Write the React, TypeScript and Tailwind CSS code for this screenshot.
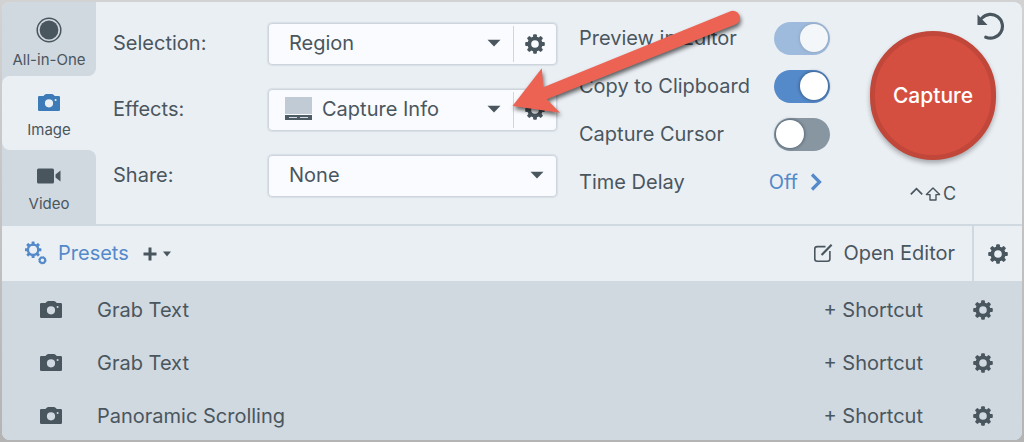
import { useState, type ReactNode } from "react";

const presets = [
  { id: 1, name: "Grab Text" },
  { id: 2, name: "Grab Text" },
  { id: 3, name: "Panoramic Scrolling" },
];

const GEAR_TEETH = [0, 45, 90, 135, 180, 225, 270, 315];

function GearIcon() {
  return (
    <svg viewBox="0 0 20 20" className="size-5" fill="currentColor" aria-hidden="true">
      {GEAR_TEETH.map((angle) => (
        <rect
          key={angle}
          x="8.1"
          y="0.2"
          width="3.8"
          height="5"
          rx="1"
          transform={`rotate(${angle} 10 10)`}
        />
      ))}
      <circle cx="10" cy="10" r="5.7" fill="none" stroke="currentColor" strokeWidth="3.8" />
    </svg>
  );
}

function PresetsIcon() {
  return (
    <svg viewBox="0 0 22 24" className="h-6 w-[22px]" fill="currentColor" aria-hidden="true">
      {GEAR_TEETH.map((angle) => (
        <rect
          key={angle}
          x="6.6"
          y="0.5"
          width="3"
          height="4"
          rx="0.6"
          transform={`rotate(${angle} 8.1 8.8)`}
        />
      ))}
      <circle cx="8.1" cy="8.8" r="5.2" fill="none" stroke="currentColor" strokeWidth="2.4" />
      <circle cx="17.4" cy="19.3" r="2.8" fill="none" stroke="currentColor" strokeWidth="2" />
      <circle
        cx="17.4"
        cy="19.3"
        r="3.6"
        fill="none"
        stroke="currentColor"
        strokeWidth="1"
        strokeDasharray="1.5 1.33"
      />
    </svg>
  );
}

function CameraIcon() {
  return (
    <svg viewBox="0 0 22 17" className="h-[17px] w-[22px]" fill="currentColor" aria-hidden="true">
      <path
        fillRule="evenodd"
        d="M1.2 2H5.4L7 .5Q7.5 0 8.2 0H14Q14.7 0 15.2.5L16.8 2H20.8Q22 2 22 3.2V15.8Q22 17 20.8 17H1.2Q0 17 0 15.8V3.2Q0 2 1.2 2ZM11 5.2A4.1 4.1 0 1 0 11 13.4A4.1 4.1 0 1 0 11 5.2ZM17.6 5A1 1 0 1 0 17.6 7A1 1 0 1 0 17.6 5Z"
      />
    </svg>
  );
}

function VideoIcon() {
  return (
    <svg viewBox="0 0 24 16" className="h-4 w-6" fill="currentColor" aria-hidden="true">
      <rect x="0" y="0.5" width="17" height="15" rx="1.5" />
      <path d="M23.5 2.5V13.5L18.5 9.5V6.5Z" />
    </svg>
  );
}

function AllInOneIcon() {
  return (
    <svg viewBox="0 0 26 26" className="size-[26px]" aria-hidden="true">
      <circle cx="13" cy="13" r="11.8" fill="none" stroke="currentColor" strokeWidth="1.5" />
      <circle cx="13" cy="13" r="9.4" fill="currentColor" />
    </svg>
  );
}

function CaptureInfoIcon() {
  return (
    <svg viewBox="0 0 27 24" className="h-6 w-[27px]" aria-hidden="true">
      <rect width="27" height="17" fill="#c0cbd5" />
      <rect y="18" width="27" height="5" fill="#4e5c66" />
      <path d="M4 20.5H12M15 20.5H23" stroke="#d5dce3" strokeWidth="1" />
    </svg>
  );
}

function UndoIcon() {
  return (
    <svg viewBox="0 0 28 28" className="size-7" aria-hidden="true">
      <path
        d="M5 6A11.9 11.9 0 1 1 8.8 25.2"
        fill="none"
        stroke="currentColor"
        strokeWidth="3.2"
        strokeLinecap="round"
      />
      <path d="M0.5 2.6V13H10.5Z" fill="currentColor" />
    </svg>
  );
}

function EditIcon() {
  return (
    <svg
      viewBox="0 0 20 20"
      className="size-5"
      fill="none"
      stroke="currentColor"
      strokeWidth="1.6"
      aria-hidden="true"
    >
      <path d="M12.5 3.6H4.2Q1.8 3.6 1.8 6V15.8Q1.8 18.2 4.2 18.2H14.5Q16.9 18.2 16.9 15.8V8" />
      <path d="M8.6 12L18.6 1.8" strokeWidth="2.2" />
    </svg>
  );
}

function ControlKeyIcon() {
  return (
    <svg viewBox="0 0 13 14" className="h-3.5 w-[13px]" aria-hidden="true">
      <path d="M0.8 7.4L6.5 1.6L12.2 7.4" fill="none" stroke="currentColor" strokeWidth="1.7" />
    </svg>
  );
}

function ShiftKeyIcon() {
  return (
    <svg viewBox="0 0 16 14" className="h-3.5 w-4" aria-hidden="true">
      <path
        d="M8 1L14.6 7.6H11V13H5V7.6H1.4Z"
        fill="none"
        stroke="currentColor"
        strokeWidth="1.4"
        strokeLinejoin="round"
      />
    </svg>
  );
}

function Caret() {
  return (
    <svg viewBox="0 0 14 8" className="h-2 w-3.5" fill="currentColor" aria-hidden="true">
      <path d="M0.5 0.8H13.5L7 7.4Z" />
    </svg>
  );
}

function PointerArrow() {
  return (
    <svg
      viewBox="508 5 240 116"
      className="pointer-events-none absolute -top-[85px] -right-[192px] z-10 h-[116px] w-[240px] drop-shadow-[1px_3px_2px_rgba(0,0,0,0.6)]"
      aria-hidden="true"
    >
      <path
        d="M512.5 106L541.8 68.3L543.3 87.3L729.8 11.6A7 7 0 0 1 736 24.3L546.7 99.3L560 112.7Z"
        fill="#ec6353"
      />
    </svg>
  );
}

type FieldProps = {
  id: string;
  label: string;
  options: string[];
  icon?: ReactNode;
  hasSettings?: boolean;
  children?: ReactNode;
};

function Field({ id, label, options, icon, hasSettings = false, children }: FieldProps) {
  return (
    <div className="flex items-center">
      <label htmlFor={id} className="w-[155px] shrink-0 pb-0.5">
        {label}:
      </label>
      <div className="relative flex h-[42px] min-w-0 flex-1 items-center rounded-sm border border-[#cfd5dc] bg-[#f9fbfe] shadow-[0_0_1px_1px_rgba(190,200,210,0.4)]">
        <div className="relative flex h-full min-w-0 flex-1 items-center pb-0.5">
          {icon ? <span className="ml-4 shrink-0">{icon}</span> : null}
          <select
            id={id}
            className={`h-full w-full min-w-0 appearance-none pr-10 outline-none ${icon ? "pl-2.5" : "pl-5"}`}
          >
            {options.map((option) => (
              <option key={option}>{option}</option>
            ))}
          </select>
          <span className="pointer-events-none absolute right-3">
            <Caret />
          </span>
        </div>
        {hasSettings ? (
          <button
            type="button"
            aria-label={`${label} settings`}
            className="flex h-9 w-[43px] items-center justify-center border-l border-[#cfd6dd]"
          >
            <GearIcon />
          </button>
        ) : null}
        {children}
      </div>
    </div>
  );
}

type ToggleProps = {
  label: string;
  defaultChecked?: boolean;
  disabled?: boolean;
};

function Toggle({ label, defaultChecked, disabled }: ToggleProps) {
  return (
    <label className="flex h-12 items-center justify-between">
      {label}
      <input
        type="checkbox"
        role="switch"
        defaultChecked={defaultChecked}
        disabled={disabled}
        className="relative h-[33px] w-14 shrink-0 appearance-none rounded-full bg-[#8896a1] before:absolute before:top-[2px] before:left-[2px] before:size-7 before:rounded-full before:bg-white before:shadow-[0_0_3px_1px_rgba(30,50,70,0.45)] checked:bg-[#5489ca] checked:before:translate-x-6 disabled:opacity-50"
      />
    </label>
  );
}

const tabs = [
  { id: "all", label: "All-in-One", icon: <AllInOneIcon />, iconBox: "h-8", shape: "rounded-br-lg" },
  { id: "image", label: "Image", icon: <CameraIcon />, iconBox: "h-7", shape: "rounded-r-lg" },
  { id: "video", label: "Video", icon: <VideoIcon />, iconBox: "h-7", shape: "rounded-tr-lg" },
];

export default function App() {
  const [activeTab, setActiveTab] = useState("image");

  return (
    <div className="bg-linear-to-b from-[#d2d2d2] to-[#b4b4b4] p-0.5 font-['Inter',sans-serif] text-[20px] leading-7 text-[#4a565e]">
      <main className="overflow-hidden rounded-lg bg-[#eaeff4]">
        <section className="flex border-b-2 border-[#d0d8e0]">
          <nav className="flex w-[94px] shrink-0 flex-col text-[15px]">
            {tabs.map((tab) => {
              const active = tab.id === activeTab;
              return (
                <div key={tab.id} className={active ? "bg-[#d0d8e0]" : ""}>
                  <button
                    type="button"
                    onClick={() => setActiveTab(tab.id)}
                    className={`flex h-[74px] w-full flex-col items-center pt-3 ${
                      active ? "rounded-l-lg bg-[#eaeff4]" : `bg-[#d0d8e0] ${tab.shape}`
                    }`}
                  >
                    <span
                      className={`flex items-center justify-center ${tab.iconBox} ${active ? "text-[#3d7ab8]" : ""}`}
                    >
                      {tab.icon}
                    </span>
                    <span className="mt-1 leading-5">{tab.label}</span>
                  </button>
                </div>
              );
            })}
          </nav>

          <form className="flex min-w-0 flex-1 flex-col gap-6 pt-[21px] pl-[17px]">
            <Field id="selection" label="Selection" options={["Region", "Window", "Fullscreen"]} hasSettings />
            <Field
              id="effects"
              label="Effects"
              options={["Capture Info", "None"]}
              icon={<CaptureInfoIcon />}
              hasSettings
            >
              <PointerArrow />
            </Field>
            <Field id="share" label="Share" options={["None", "Clipboard", "File"]} />
          </form>

          <div className="ml-[22px] w-[251px] shrink-0 pt-3">
            <Toggle label="Preview in Editor" defaultChecked disabled />
            <Toggle label="Copy to Clipboard" defaultChecked />
            <Toggle label="Capture Cursor" />
            <div className="flex h-12 items-center justify-between">
              <span>Time Delay</span>
              <button type="button" className="flex items-center gap-3 pr-2 text-[#5489ca]">
                Off
                <svg viewBox="0 0 12 18" className="h-[18px] w-3" aria-hidden="true">
                  <path d="M2 1.5L9.5 9L2 16.5" fill="none" stroke="currentColor" strokeWidth="3.2" />
                </svg>
              </button>
            </div>
          </div>

          <div className="relative ml-10 flex w-[152px] shrink-0 flex-col pt-[29px]">
            <button type="button" aria-label="Reset" className="absolute top-2.5 right-[17px]">
              <UndoIcon />
            </button>
            <button
              type="button"
              className="h-[129px] w-[126px] rounded-full border-[5px] border-[#c0473a] bg-[#d54f40] text-[21px] font-medium text-white shadow-[0_3px_5px_rgba(0,0,0,0.3)]"
            >
              Capture
            </button>
            <p className="mt-5 flex w-[126px] items-center justify-center gap-0.5 text-lg">
              <ControlKeyIcon />
              <ShiftKeyIcon />
              <span>C</span>
            </p>
          </div>
        </section>

        <section className="flex h-[55px] items-center">
          <h2 className="ml-[23px] flex items-center gap-[11px] pb-0.5 text-[#5489ca]">
            <PresetsIcon />
            Presets
          </h2>
          <button type="button" aria-label="Add preset" className="ml-3.5 flex items-center gap-1.5">
            <svg viewBox="0 0 14 14" className="size-3.5" aria-hidden="true">
              <path d="M7 0.5V13.5M0.5 7H13.5" stroke="currentColor" strokeWidth="3" />
            </svg>
            <svg viewBox="0 0 8 6" className="h-1.5 w-2" fill="currentColor" aria-hidden="true">
              <path d="M0 0.5H8L4 5.5Z" />
            </svg>
          </button>
          <button type="button" className="mr-[17px] ml-auto flex items-center gap-2.5 pb-0.5">
            <EditIcon />
            Open Editor
          </button>
          <button
            type="button"
            aria-label="Preferences"
            className="flex h-full w-[50px] items-center justify-center border-l-2 border-[#d0d8e0]"
          >
            <GearIcon />
          </button>
        </section>

        <ul className="flex flex-col gap-5 bg-[#d0d8e0] pt-3 pr-[29px] pb-2 pl-[38px]">
          {presets.map((preset) => (
            <li key={preset.id} className="flex h-[33px] items-center">
              <CameraIcon />
              <span className="ml-[35px] flex-1">{preset.name}</span>
              <button type="button">+ Shortcut</button>
              <button type="button" aria-label={`${preset.name} settings`} className="ml-[50px]">
                <GearIcon />
              </button>
            </li>
          ))}
        </ul>
      </main>
    </div>
  );
}
